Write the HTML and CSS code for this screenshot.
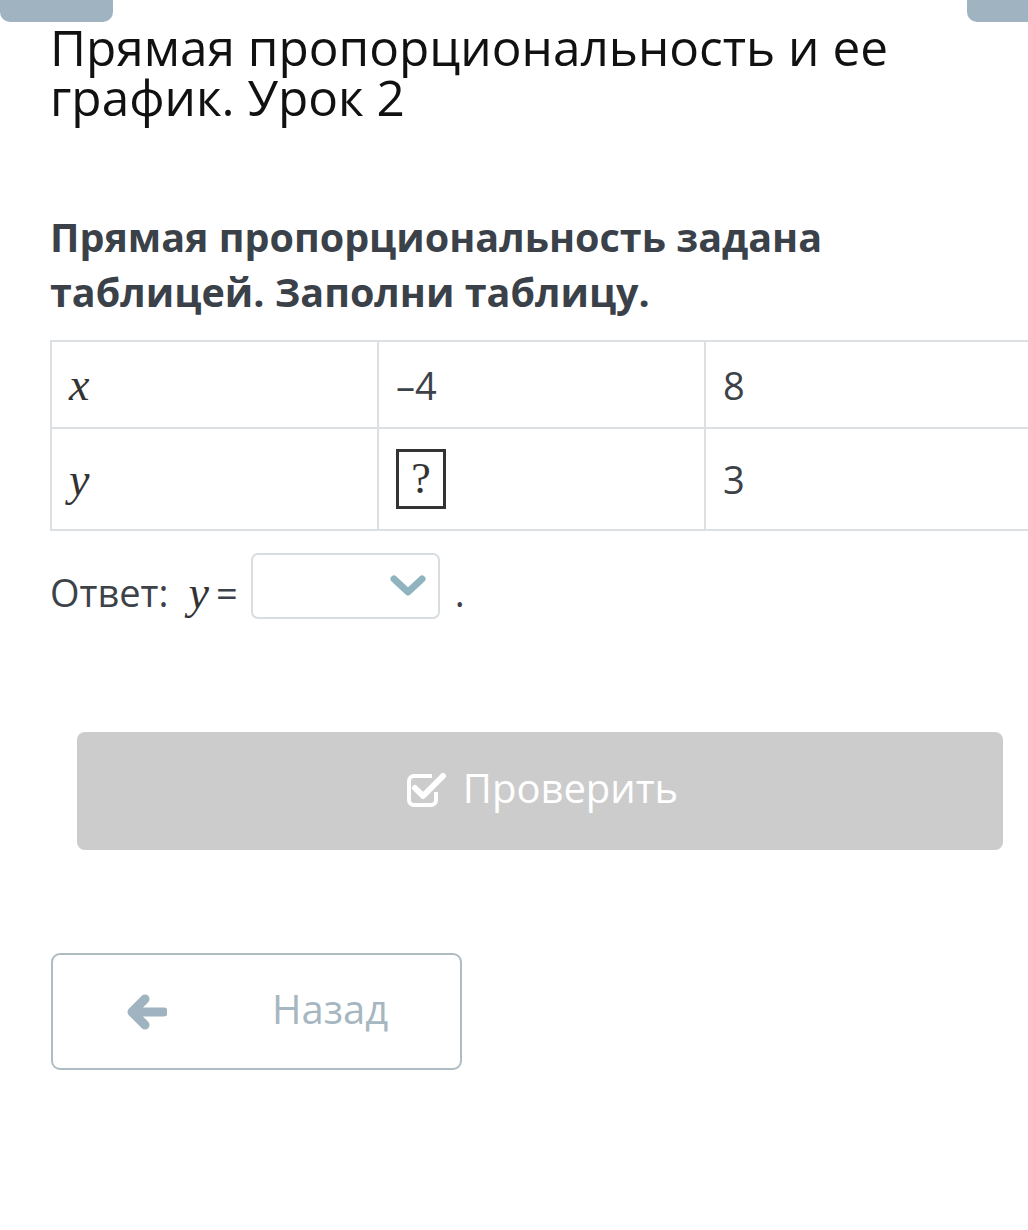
FILE: index.html
```html
<!DOCTYPE html>
<html lang="ru">
<head>
<meta charset="utf-8">
<title>Прямая пропорциональность и ее график. Урок 2</title>
<link rel="stylesheet" href="styles.css">
</head>
<body>
<div class="tab tab-left"></div>
<div class="tab tab-right"></div>
<main class="page">
  <h1 class="title">Прямая пропорциональность и ее график. Урок 2</h1>
  <h2 class="task">Прямая пропорциональность задана таблицей. Заполни таблицу.</h2>
  <table class="grid">
    <colgroup><col class="c"><col class="c"><col class="c"></colgroup>
    <tr class="row-x">
      <td><span class="math">x</span></td>
      <td>–4</td>
      <td>8</td>
    </tr>
    <tr class="row-y">
      <td><span class="math">y</span></td>
      <td><span class="qbox">?</span></td>
      <td>3</td>
    </tr>
  </table>
  <div class="answer">
    <span class="label">Ответ:</span>
    <span class="label math eq">y</span>
    <span class="label">=</span>
    <span class="select">
      <svg class="chev" viewBox="0 0 36 24" width="36" height="24"><path d="M4 5 L18 18 L32 5" fill="none" stroke="#8fb4bf" stroke-width="7" stroke-linecap="round" stroke-linejoin="round"/></svg>
    </span>
    <span class="label dot">.</span>
  </div>
  <div class="check-wrap">
    <button class="check" type="button">
      <svg class="check-ico" viewBox="0 0 40 38" width="40" height="38"><path d="M30 21 V29 A5 5 0 0 1 25 34 H8 A5 5 0 0 1 3 29 V10 A5 5 0 0 1 8 5 H26" fill="none" stroke="#fff" stroke-width="4"/><path d="M9 17 L17 25 L37 5" fill="none" stroke="#fff" stroke-width="6" stroke-linecap="round" stroke-linejoin="round"/></svg>
      <span>Проверить</span>
    </button>
  </div>
  <button class="back" type="button">
    <svg class="arrow" viewBox="0 0 40 36" width="40" height="36"><path d="M37 18 H8 M18 5 L5 18 L18 31" fill="none" stroke="#9fb3c0" stroke-width="9" stroke-linecap="round" stroke-linejoin="round"/></svg>
    <span class="back-text">Назад</span>
  </button>
</main>
</body>
</html>
```
FILE: styles.css
```css
html, body {
  margin: 0;
  padding: 0;
  background: #fff;
  overflow-x: hidden;
}
body {
  font-family: "Open Sans", "Noto Sans", sans-serif;
  color: #3d4248;
  position: relative;
  width: 1028px;
  min-height: 1230px;
}
.tab {
  position: absolute;
  top: 0;
  height: 22px;
  background: #9fb3c1;
  border-radius: 0 0 10px 10px;
}
.tab-left { left: 0; width: 113px; }
.tab-right { left: 967px; width: 70px; }
.page {
  padding: 22px 0 0 50px;
}
.title {
  margin: 0;
  font-size: 49.5px;
  line-height: 50px;
  font-weight: 400;
  color: #111;
  width: 940px;
}
.task {
  margin: 88px 0 0 0;
  font-size: 39.5px;
  line-height: 55px;
  font-weight: 700;
  color: #3a4149;
  width: 900px;
}
.grid {
  margin-top: 20px;
  border-collapse: collapse;
  table-layout: fixed;
  width: 981px;
  font-size: 38px;
  color: #3d4248;
}
.grid .c { width: 327px; }
.grid td {
  border: 2px solid #dde0e2;
  padding: 0 0 0 17px;
  vertical-align: middle;
}
.row-x td { height: 85px; }
.row-y td { height: 100px; }
.math {
  font-family: "Liberation Serif", "DejaVu Serif", serif;
  font-style: italic;
  font-size: 46px;
  color: #333;
}
.qbox {
  display: inline-block;
  box-sizing: border-box;
  width: 50px;
  height: 60px;
  border: 3px solid #333;
  font-family: "Liberation Serif", "DejaVu Serif", serif;
  font-size: 44px;
  line-height: 54px;
  text-align: center;
  color: #333;
  vertical-align: middle;
}
.answer {
  margin-top: 22px;
  display: flex;
  align-items: flex-start;
  height: 66px;
  font-size: 38px;
}
.answer .label {
  line-height: 65px;
  margin-top: 7px;
}
.answer .eq {
  margin: 7px 7px 0 20px;
}
.select {
  box-sizing: border-box;
  width: 189px;
  height: 66px;
  margin-left: 13px;
  border: 2px solid #d7dde0;
  border-radius: 7px;
  display: flex;
  align-items: center;
  justify-content: flex-end;
  padding-right: 12px;
}
.chev { display: block; }
.answer .dot { margin-left: 15px; }
.check-wrap {
  margin-top: 113px;
  padding-left: 27px;
}
.check {
  width: 926px;
  height: 118px;
  border: none;
  border-radius: 8px;
  background: #cccccc;
  color: #fff;
  font-family: "Open Sans", "Noto Sans", sans-serif;
  font-size: 40px;
  display: flex;
  align-items: center;
  justify-content: center;
  gap: 17px;
  padding: 0 0 8px 4px;
}
.check-ico { display: block; margin-top: 6px; }
.back {
  margin-top: 103px;
  box-sizing: border-box;
  width: 411px;
  height: 117px;
  border: 2px solid #b0bcc3;
  border-radius: 9px;
  background: #fff;
  display: flex;
  align-items: center;
  padding: 0 0 6px 74px;
  margin-left: 1px;
  font-family: "Open Sans", "Noto Sans", sans-serif;
  font-size: 40px;
  color: #a6b7c1;
}
.arrow { display: block; margin-top: 6px; }
.back-text { margin-left: 105px; }
```
